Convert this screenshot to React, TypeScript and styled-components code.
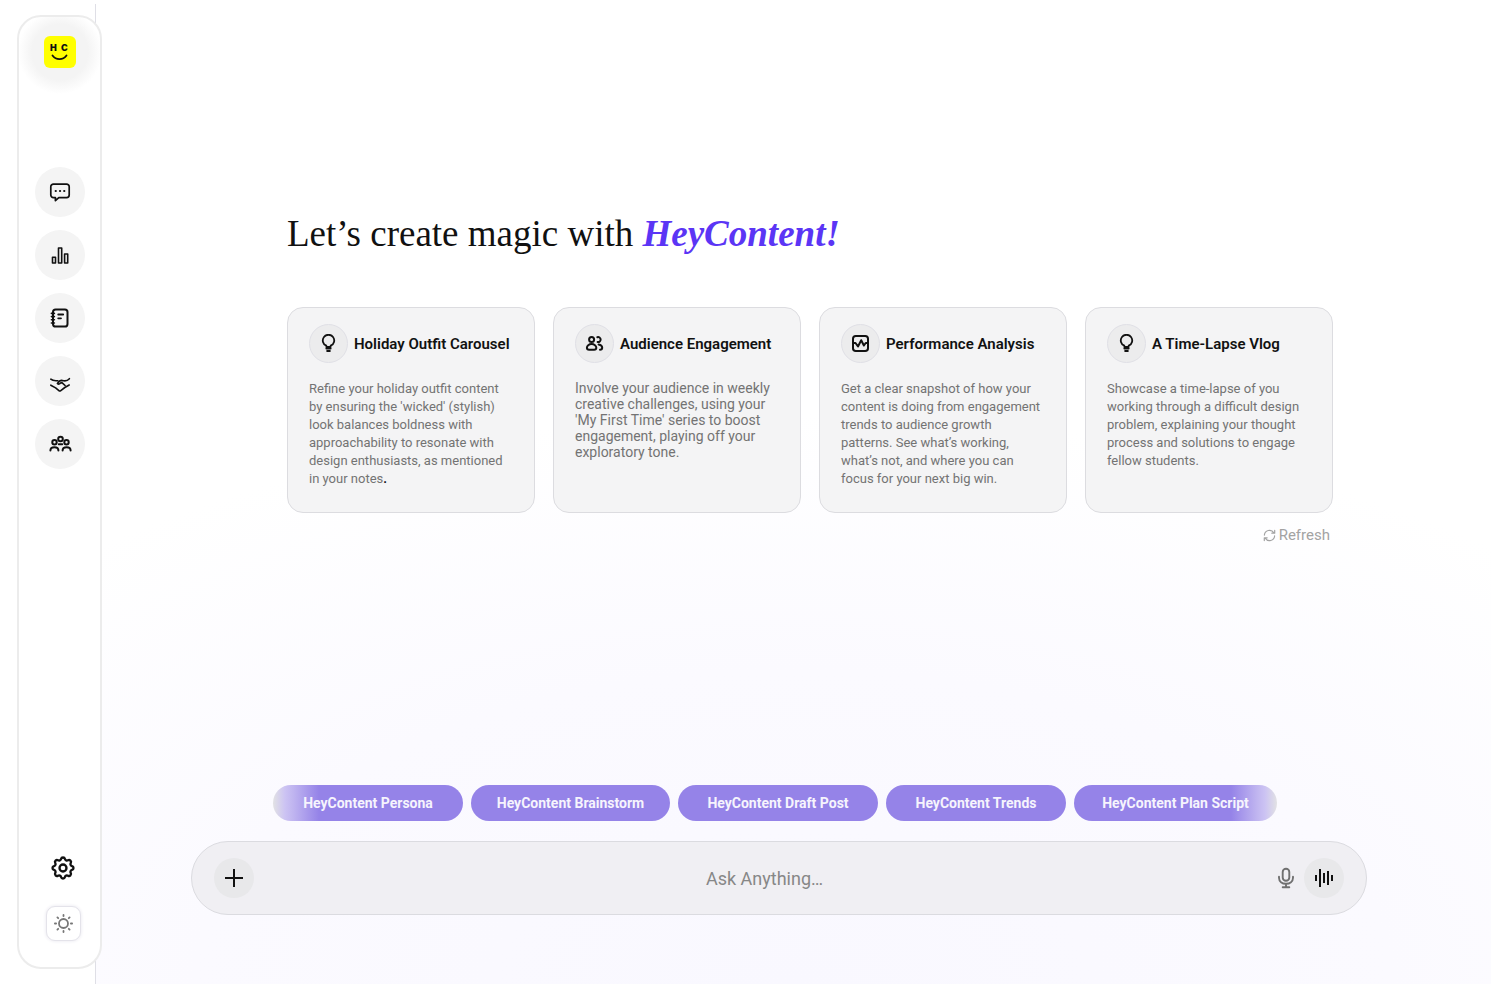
import React from "react";
import styled, { createGlobalStyle } from "styled-components";

const GlobalStyle = createGlobalStyle`
  *, *::before, *::after { box-sizing: border-box; }
  body {
    margin: 0;
    font-family: Roboto, "Liberation Sans", sans-serif;
    color: #111;
    background: #fff;
  }
  button, input { font: inherit; color: inherit; }
`;

const Page = styled.div`
  display: grid;
  grid-template-columns: 96px minmax(0, 1fr);
  min-height: 100vh;
`;

const Rail = styled.aside`
  display: flex;
  margin-top: 4px;
  padding: 11px 0 15px 17px;
  border-right: 1px solid #dfdfe6;
`;

const Panel = styled.div`
  flex: 0 0 85px;
  z-index: 1;
  display: flex;
  flex-direction: column;
  align-items: center;
  padding: 19px 0 26px;
  border: 2px solid #ececec;
  border-radius: 24px;
  background: radial-gradient(circle at 41px 35px, #f4f4f4 28px, #fff 42px);
`;

const Logo = styled.a`
  display: block;
  width: 32px;
  height: 32px;
  border-radius: 6px;
  background: #ffff00;
`;

const Nav = styled.nav`
  display: flex;
  flex-direction: column;
  gap: 13px;
  margin-top: 99px;
`;

const NavLink = styled.a`
  display: grid;
  place-items: center;
  width: 50px;
  height: 50px;
  border-radius: 50%;
  background: #f4f4f4;
  color: #111;
`;

const RailFooter = styled.div`
  display: flex;
  flex-direction: column;
  align-items: center;
  gap: 24px;
  margin-top: auto;
  padding-left: 7px;
`;

const PlainButton = styled.button`
  display: flex;
  align-items: center;
  justify-content: center;
  padding: 0;
  border: 0;
  background: none;
  cursor: pointer;
`;

const ThemeButton = styled(PlainButton)`
  width: 35px;
  height: 35px;
  border: 1px solid #e4e3ea;
  border-radius: 9px;
  background: #fff;
  color: #777;
  box-shadow: 0 0 3px 1px #f1f0f5;
`;

const Main = styled.main`
  display: flex;
  flex-direction: column;
  min-width: 0;
  padding: 208px 0 69px;
  background: radial-gradient(ellipse 78% 58% at 50% 100%, #f9f8ff 0%, #fbfaff 55%, #fff 100%);
`;

const Ideas = styled.section`
  margin: 0 158px 0 191px;
`;

const Title = styled.h1`
  margin: 0 0 47px;
  font-family: "Liberation Serif", serif;
  font-size: 37px;
  line-height: 52px;
  font-weight: 400;
  white-space: nowrap;

  em { color: #5b35f5; font-weight: 700; }
`;

const CardGrid = styled.div`
  display: grid;
  grid-template-columns: repeat(4, minmax(0, 1fr));
  gap: 18px;
`;

const Card = styled.article`
  min-height: 206px;
  padding: 16px 20px 20px 21px;
  border: 1px solid #dcdce0;
  border-radius: 16px;
  background: #f4f4f5;
`;

const CardHeader = styled.header`
  display: flex;
  align-items: center;
  gap: 6px;
  margin-bottom: 17px;
`;

const CardIcon = styled.span`
  flex: none;
  display: grid;
  place-items: center;
  width: 39px;
  height: 39px;
  border: 1px solid #e0e0e6;
  border-radius: 50%;
  background: #ececed;
`;

const CardTitle = styled.h2`
  margin: 0;
  font-size: 15px;
  line-height: 20px;
  font-weight: 600;
  white-space: nowrap;
`;

const CardText = styled.p<{ $large?: boolean }>`
  margin: 0;
  font-size: ${(p) => (p.$large ? 14 : 13)}px;
  line-height: ${(p) => (p.$large ? 16 : 18)}px;
  color: #737373;

  b { color: #111; }
`;

const RefreshButton = styled(PlainButton)`
  gap: 3px;
  margin: 12px 3px 0 auto;
  font-size: 15px;
  line-height: 20px;
  color: #a3a3a3;
`;

const Composer = styled.section`
  display: flex;
  flex-direction: column;
  gap: 20px;
  margin: auto 124px 0 95px;
`;

const Chips = styled.div`
  display: flex;
  gap: 8px;
  margin: 0 90px 0 82px;
`;

const fade = "#e2e2e4 0, #ccc3f3 12px, #c0b5f0 20px, #9583e8 46px";

const Chip = styled.button<{ $basis: number; $fade?: "left" | "right" }>`
  flex: 1 1 ${(p) => p.$basis}px;
  height: 36px;
  padding: 0;
  border: 0;
  border-radius: 18px;
  background: ${(p) =>
    p.$fade ? `linear-gradient(to ${p.$fade === "left" ? "right" : "left"}, ${fade})` : "#9583e8"};
  color: #f6f4fd;
  font-size: 14px;
  line-height: 20px;
  font-weight: 700;
  white-space: nowrap;
  cursor: pointer;
`;

const AskBar = styled.form`
  display: flex;
  align-items: center;
  min-height: 74px;
  padding: 0 22px;
  border: 1px solid #dbdbe0;
  border-radius: 37px;
  background: #f0eff3;
`;

const AskInput = styled.input`
  flex: 1;
  min-width: 0;
  height: 40px;
  padding: 0;
  border: 0;
  outline: 0;
  background: none;
  font-size: 18px;
  text-align: center;

  &::placeholder { color: #878787; opacity: 1; }
`;

const RoundButton = styled(PlainButton)`
  width: 40px;
  height: 40px;
  border-radius: 50%;
  background: #e8e8ea;
  color: #111;
`;

const MicButton = styled(PlainButton)`
  width: 22px;
  height: 40px;
  margin-right: 7px;
  color: #707070;
`;

type IconProps = { size: number; box?: number; stroke?: number; children: React.ReactNode };

const Icon = ({ size, box = size, stroke = 2, children }: IconProps) => (
  <svg
    width={size}
    height={size}
    viewBox={`0 0 ${box} ${box}`}
    fill="none"
    stroke="currentColor"
    strokeWidth={stroke}
    strokeLinecap="round"
    strokeLinejoin="round"
    aria-hidden="true"
  >
    {children}
  </svg>
);

const ChatIcon = () => (
  <Icon size={24} stroke={1.7}>
    <path d="M5.4 4.2h13.2a2.6 2.6 0 0 1 2.6 2.6v8.2a2.6 2.6 0 0 1-2.6 2.6h-7.8L7.4 20.7v-3.1H5.4A2.6 2.6 0 0 1 2.8 15V6.8a2.6 2.6 0 0 1 2.6-2.6z" />
    <path d="M7.7 11h.1M12 11h.1M16.2 11h.1" strokeWidth="2.2" />
  </Icon>
);

const BarsIcon = () => (
  <Icon size={24} stroke={1.6}>
    <path d="M4.5 14.2h3v5.8h-3zM10.5 5h3.2v15h-3.2zM16.6 11h3.1v9h-3.1z" />
  </Icon>
);

const NotebookIcon = () => (
  <Icon size={24} stroke={2}>
    <rect x="5" y="3.5" width="14.5" height="17" rx="2.6" />
    <path d="M3.4 7.4h3M3.4 10.6h3M3.4 13.8h3M3.4 17h3" strokeWidth="1.6" />
    <path d="M10.2 8.5h5M10.2 12.3h2.8" strokeWidth="1.8" />
  </Icon>
);

const HandshakeIcon = () => (
  <Icon size={24} stroke={1.6}>
    <path d="M2.8 10.2c1.7 1.6 4.2 1.8 7 1.5M21.4 9.7c-1.7 2-3.6 2.4-5.7 2.1l-2.5-.4c-1.7 0-2.8 1.7-3.8 3.1 1 1 2.4.7 3.3-.6l1.5-.1 2.900 2.7" />
    <path d="M2.8 16.2l4.8 2.7 3.3 2.8c.6.500 1.300.4 1.900-.1l4-3.1 4.4-2.5" />
  </Icon>
);

const TeamIcon = () => (
  <Icon size={24} stroke={2}>
    <circle cx="12.5" cy="7" r="2.3" />
    <circle cx="6.5" cy="10.2" r="2.2" />
    <circle cx="18.5" cy="10.2" r="2.2" />
    <path d="M10.8 12.3h3.4M2.4 18.6c0-2.3 1.6-3.3 4-3.3s4 1 4 3.3M14.6 18.6c0-2.3 1.6-3.3 4-3.3s4 1 4 3.3" />
  </Icon>
);

const GearIcon = () => (
  <Icon size={28} box={24} stroke={2}>
    <path d="M10.325 4.317c.426-1.756 2.924-1.756 3.35 0a1.724 1.724 0 0 0 2.573 1.066c1.543-.94 3.31.826 2.37 2.37a1.724 1.724 0 0 0 1.065 2.572c1.756.426 1.756 2.924 0 3.35a1.724 1.724 0 0 0-1.066 2.573c.94 1.543-.826 3.31-2.37 2.37a1.724 1.724 0 0 0-2.572 1.065c-.426 1.756-2.924 1.756-3.35 0a1.724 1.724 0 0 0-2.573-1.066c-1.543.94-3.31-.826-2.37-2.37a1.724 1.724 0 0 0-1.065-2.572c-1.756-.426-1.756-2.924 0-3.35a1.724 1.724 0 0 0 1.066-2.573c-.94-1.543.826-3.31 2.37-2.37 1 .608 2.296.07 2.572-1.065z" />
    <circle cx="12" cy="12" r="3" />
  </Icon>
);

const SunIcon = () => (
  <Icon size={21} stroke={1.8}>
    <circle cx="10.5" cy="10.5" r="4.5" />
    <path d="M10.5 1.9v1.2M10.5 17.900v1.200M1.900 10.500h1.200M17.900 10.500h1.200M4.400 4.400l.8.800M15.800 15.800l.8.800M4.400 16.600l.8-.8M15.800 5.200l.8-.8" />
  </Icon>
);

const BulbIcon = () => (
  <Icon size={19} stroke={1.8}>
    <path d="M7.3 12.9v-1.2A5.7 5.7 0 1 1 11.7 11.7v1.2zM7.3 14.6h4.4M8.1 17h2.8" />
  </Icon>
);

const PeopleIcon = () => (
  <Icon size={19} stroke={2}>
    <circle cx="6.6" cy="5.6" r="2.5" />
    <path d="M6.6 10c-2.7 0-4.7 1.9-4.7 3.7 0 1.4 1 2 2.2 2h5c1.2 0 2.2-.6 2.2-2 0-1.8-2-3.7-4.7-3.7zM12.3 3.2a2.5 2.5 0 1 1 .3 4.8M13.6 10.4c2.2.4 3.6 1.8 3.6 3.4 0 1.2-.8 1.9-2.2 1.9" />
  </Icon>
);

const PulseIcon = () => (
  <Icon size={19}>
    <rect x="2" y="2" width="15" height="15" rx="2.8" />
    <path d="M2.5 9h2l2.5 3.5 3.2-6.3 2.7 5.3 1.8-2.5h1.8" />
  </Icon>
);

const RefreshIcon = () => (
  <Icon size={13} box={14} stroke={1.3}>
    <path d="M1.5 6.5A5.5 5.5 0 0 1 11.6 4M12.6 1.5v3H9.5M12.5 7.5A5.5 5.5 0 0 1 2.4 10M1.4 12.5v-3h3.1" />
  </Icon>
);

const MicIcon = () => (
  <Icon size={22} stroke={1.9}>
    <rect x="7.7" y="1.8" width="6.6" height="12" rx="3.3" />
    <path d="M4 9.8v1c0 3.6 3.1 6 7 6s7-2.4 7-6v-1M11 17v3M7.7 20.3h6.6" />
  </Icon>
);

const navItems = [
  { label: "Chat", icon: <ChatIcon /> },
  { label: "Analytics", icon: <BarsIcon /> },
  { label: "Notes", icon: <NotebookIcon /> },
  { label: "Partnerships", icon: <HandshakeIcon /> },
  { label: "Community", icon: <TeamIcon /> },
];

const cards = [
  {
    title: "Holiday Outfit Carousel",
    icon: <BulbIcon />,
    text: (
      <>
        Refine your holiday outfit content by ensuring the 'wicked' (stylish) look balances boldness
        with approachability to resonate with design enthusiasts, as mentioned in your notes<b>.</b>
      </>
    ),
  },
  {
    title: "Audience Engagement",
    icon: <PeopleIcon />,
    large: true,
    text: "Involve your audience in weekly creative challenges, using your 'My First Time' series to boost engagement, playing off your exploratory tone.",
  },
  {
    title: "Performance Analysis",
    icon: <PulseIcon />,
    text: "Get a clear snapshot of how your content is doing from engagement trends to audience growth patterns. See what’s working, what’s not, and where you can focus for your next big win.",
  },
  {
    title: "A Time-Lapse Vlog",
    icon: <BulbIcon />,
    text: "Showcase a time-lapse of you working through a difficult design problem, explaining your thought process and solutions to engage fellow students.",
  },
];

const chips: { label: string; basis: number; fade?: "left" | "right" }[] = [
  { label: "HeyContent Persona", basis: 190, fade: "left" },
  { label: "HeyContent Brainstorm", basis: 199 },
  { label: "HeyContent Draft Post", basis: 200 },
  { label: "HeyContent Trends", basis: 180 },
  { label: "HeyContent Plan Script", basis: 203, fade: "right" },
];

export default function App() {
  return (
    <>
      <GlobalStyle />
      <Page>
        <Rail>
          <Panel>
            <Logo href="#" aria-label="HeyContent home">
              <svg width="32" height="32" viewBox="0 0 32 32" aria-hidden="true">
                <g fill="#111" fontFamily="Inter, sans-serif" fontSize="9" fontWeight="900">
                  <text x="6" y="15">H</text>
                  <text x="17" y="15">C</text>
                </g>
                <path d="M8.5 19.5c3.5 4.8 10.5 4.8 14 0" fill="none" stroke="#111" strokeWidth="1.8" strokeLinecap="round" />
              </svg>
            </Logo>
            <Nav aria-label="Main">
              {navItems.map((item) => (
                <NavLink key={item.label} href="#" aria-label={item.label}>
                  {item.icon}
                </NavLink>
              ))}
            </Nav>
            <RailFooter>
              <PlainButton type="button" aria-label="Settings">
                <GearIcon />
              </PlainButton>
              <ThemeButton type="button" aria-label="Toggle theme">
                <SunIcon />
              </ThemeButton>
            </RailFooter>
          </Panel>
        </Rail>
        <Main>
          <Ideas>
            <Title>
              Let’s create magic with <em>HeyContent!</em>
            </Title>
            <CardGrid>
              {cards.map((card) => (
                <Card key={card.title}>
                  <CardHeader>
                    <CardIcon>{card.icon}</CardIcon>
                    <CardTitle>{card.title}</CardTitle>
                  </CardHeader>
                  <CardText $large={card.large}>{card.text}</CardText>
                </Card>
              ))}
            </CardGrid>
            <RefreshButton type="button">
              <RefreshIcon />
              Refresh
            </RefreshButton>
          </Ideas>
          <Composer>
            <Chips>
              {chips.map((chip) => (
                <Chip key={chip.label} type="button" $basis={chip.basis} $fade={chip.fade}>
                  {chip.label}
                </Chip>
              ))}
            </Chips>
            <AskBar onSubmit={(e) => e.preventDefault()}>
              <RoundButton type="button" aria-label="Add attachment">
                <Icon size={20}>
                  <path d="M10 1v18M1 10h18" strokeLinecap="butt" />
                </Icon>
              </RoundButton>
              <AskInput type="text" aria-label="Ask Anything" placeholder="Ask Anything…" />
              <MicButton type="button" aria-label="Dictate">
                <MicIcon />
              </MicButton>
              <RoundButton type="button" aria-label="Voice mode">
                <Icon size={20}>
                  <path d="M2 7v6M6 1v18M10 5v10M14 3v14M18 7v6" strokeLinecap="butt" />
                </Icon>
              </RoundButton>
            </AskBar>
          </Composer>
        </Main>
      </Page>
    </>
  );
}
